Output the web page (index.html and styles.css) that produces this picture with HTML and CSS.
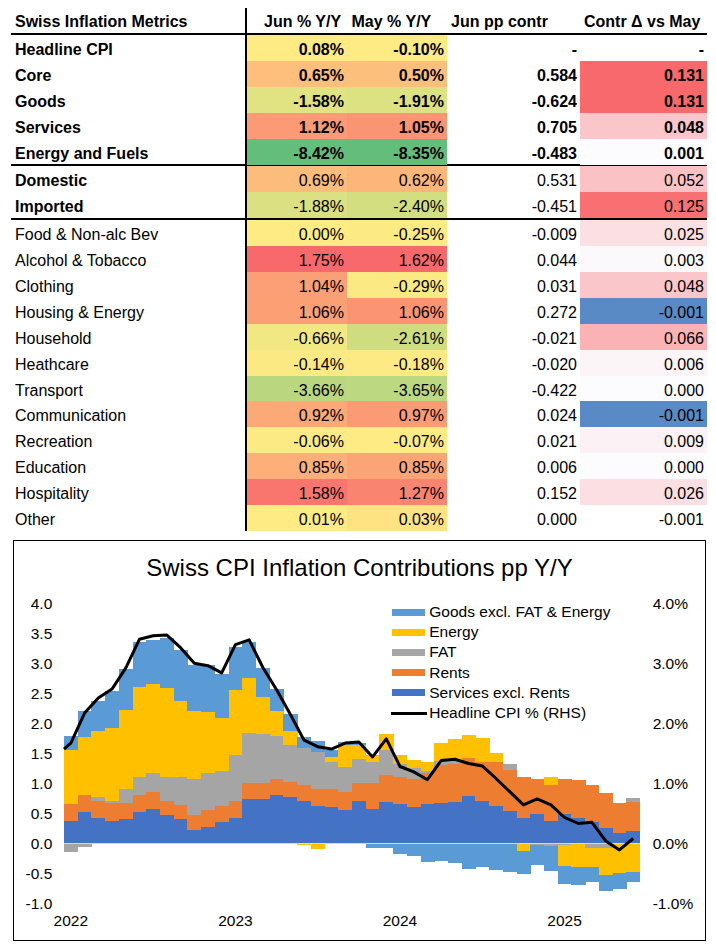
FILE: index.html
```html
<!DOCTYPE html>
<html lang="en">
<head>
<meta charset="utf-8">
<title>Swiss Inflation Metrics</title>
<link rel="stylesheet" href="styles.css">
</head>
<body>
<div class="page">
  <div class="tbl">
    <div class="row head">
      <div class="c lbl">Swiss Inflation Metrics</div>
      <div class="c h-jun">Jun % Y/Y</div>
      <div class="c h-may">May % Y/Y</div>
      <div class="c h-pp">Jun pp contr</div>
      <div class="c h-ct">Contr Δ vs May</div>
    </div>
    <div class="grp bold">
      <div class="row"><div class="c lbl">Headline CPI</div><div class="c j" data-v="0.08">0.08%</div><div class="c m" data-v="-0.10">-0.10%</div><div class="c">-</div><div class="c">-</div></div>
      <div class="row"><div class="c lbl">Core</div><div class="c j" data-v="0.65">0.65%</div><div class="c m" data-v="0.50">0.50%</div><div class="c">0.584</div><div class="c d" data-v="0.131">0.131</div></div>
      <div class="row"><div class="c lbl">Goods</div><div class="c j" data-v="-1.58">-1.58%</div><div class="c m" data-v="-1.91">-1.91%</div><div class="c">-0.624</div><div class="c d" data-v="0.131">0.131</div></div>
      <div class="row"><div class="c lbl">Services</div><div class="c j" data-v="1.12">1.12%</div><div class="c m" data-v="1.05">1.05%</div><div class="c">0.705</div><div class="c d" data-v="0.048">0.048</div></div>
      <div class="row"><div class="c lbl">Energy and Fuels</div><div class="c j" data-v="-8.42">-8.42%</div><div class="c m" data-v="-8.35">-8.35%</div><div class="c">-0.483</div><div class="c d" data-v="0.001">0.001</div></div>
    </div>
    <div class="grp bold-lbl">
      <div class="row"><div class="c lbl">Domestic</div><div class="c j" data-v="0.69">0.69%</div><div class="c m" data-v="0.62">0.62%</div><div class="c">0.531</div><div class="c d" data-v="0.052">0.052</div></div>
      <div class="row"><div class="c lbl">Imported</div><div class="c j" data-v="-1.88">-1.88%</div><div class="c m" data-v="-2.40">-2.40%</div><div class="c">-0.451</div><div class="c d" data-v="0.125">0.125</div></div>
    </div>
    <div class="grp last">
      <div class="row"><div class="c lbl">Food &amp; Non-alc Bev</div><div class="c j" data-v="0.00">0.00%</div><div class="c m" data-v="-0.25">-0.25%</div><div class="c">-0.009</div><div class="c d" data-v="0.025">0.025</div></div>
      <div class="row"><div class="c lbl">Alcohol &amp; Tobacco</div><div class="c j" data-v="1.75">1.75%</div><div class="c m" data-v="1.62">1.62%</div><div class="c">0.044</div><div class="c d" data-v="0.003">0.003</div></div>
      <div class="row"><div class="c lbl">Clothing</div><div class="c j" data-v="1.04">1.04%</div><div class="c m" data-v="-0.29">-0.29%</div><div class="c">0.031</div><div class="c d" data-v="0.048">0.048</div></div>
      <div class="row"><div class="c lbl">Housing &amp; Energy</div><div class="c j" data-v="1.06">1.06%</div><div class="c m" data-v="1.06">1.06%</div><div class="c">0.272</div><div class="c d" data-v="-0.001">-0.001</div></div>
      <div class="row"><div class="c lbl">Household</div><div class="c j" data-v="-0.66">-0.66%</div><div class="c m" data-v="-2.61">-2.61%</div><div class="c">-0.021</div><div class="c d" data-v="0.066">0.066</div></div>
      <div class="row"><div class="c lbl">Heathcare</div><div class="c j" data-v="-0.14">-0.14%</div><div class="c m" data-v="-0.18">-0.18%</div><div class="c">-0.020</div><div class="c d" data-v="0.006">0.006</div></div>
      <div class="row"><div class="c lbl">Transport</div><div class="c j" data-v="-3.66">-3.66%</div><div class="c m" data-v="-3.65">-3.65%</div><div class="c">-0.422</div><div class="c d" data-v="0.000">0.000</div></div>
      <div class="row"><div class="c lbl">Communication</div><div class="c j" data-v="0.92">0.92%</div><div class="c m" data-v="0.97">0.97%</div><div class="c">0.024</div><div class="c d" data-v="-0.001">-0.001</div></div>
      <div class="row"><div class="c lbl">Recreation</div><div class="c j" data-v="-0.06">-0.06%</div><div class="c m" data-v="-0.07">-0.07%</div><div class="c">0.021</div><div class="c d" data-v="0.009">0.009</div></div>
      <div class="row"><div class="c lbl">Education</div><div class="c j" data-v="0.85">0.85%</div><div class="c m" data-v="0.85">0.85%</div><div class="c">0.006</div><div class="c d" data-v="0.000">0.000</div></div>
      <div class="row"><div class="c lbl">Hospitality</div><div class="c j" data-v="1.58">1.58%</div><div class="c m" data-v="1.27">1.27%</div><div class="c">0.152</div><div class="c d" data-v="0.026">0.026</div></div>
      <div class="row"><div class="c lbl">Other</div><div class="c j" data-v="0.01">0.01%</div><div class="c m" data-v="0.03">0.03%</div><div class="c">0.000</div><div class="c">-0.001</div></div>
    </div>
  </div>

  <div class="chart">
    <h2 class="chart-title">Swiss CPI Inflation Contributions pp Y/Y</h2>
    <svg id="plot" class="plot" width="691" height="359" viewBox="0 0 691 359" shape-rendering="crispEdges"></svg>
    <div class="legend">
      <div class="lg-item"><span class="mk"><span class="sw sw-goods"></span></span><span class="lg-txt">Goods excl. FAT &amp; Energy</span></div>
      <div class="lg-item"><span class="mk"><span class="sw sw-energy"></span></span><span class="lg-txt">Energy</span></div>
      <div class="lg-item"><span class="mk"><span class="sw sw-fat"></span></span><span class="lg-txt">FAT</span></div>
      <div class="lg-item"><span class="mk"><span class="sw sw-rents"></span></span><span class="lg-txt">Rents</span></div>
      <div class="lg-item"><span class="mk"><span class="sw sw-svc"></span></span><span class="lg-txt">Services excl. Rents</span></div>
      <div class="lg-item"><span class="mk"><span class="ln"></span></span><span class="lg-txt">Headline CPI % (RHS)</span></div>
    </div>
  </div>
</div>
<script src="script.js"></script>
</body>
</html>
```

FILE: styles.css
```css
* { box-sizing: border-box; }

html, body {
  margin: 0;
  background: #ffffff;
}

body {
  font-family: "Liberation Sans", Arial, sans-serif;
  color: #000000;
}

.page {
  width: 716px;
  padding: 8px 0 0 11px;
}

.tbl {
  width: 696px;
}

.row {
  display: grid;
  grid-template-columns: 236px 100px 100px 133px 127px;
  height: 25.9px;
}

.c {
  padding: 3px 3px 0 0;
  line-height: 23px;
  font-size: 16px;
  text-align: right;
  white-space: nowrap;
  overflow: visible;
}

.c.lbl {
  text-align: left;
  padding-left: 4px;
  border-right: 2px solid #000000;
}

.head {
  height: 27px;
  border-bottom: 2px solid #000000;
  font-weight: bold;
}

.head .c {
  padding-top: 2px;
  text-align: left;
}

.head .h-jun { padding-left: 17px; }
.head .h-may { padding-left: 4.5px; }
.head .h-pp { padding-left: 4px; }
.head .h-ct { padding-left: 4px; }

.grp {
  border-bottom: 2px solid #000000;
}

.grp.last {
  border-bottom: none;
}

.bold .c { font-weight: bold; }
.bold-lbl .lbl { font-weight: bold; }

/* chart */
.chart {
  position: relative;
  width: 693px;
  height: 401px;
  margin: 9px 0 0 2px;
  border: 1px solid #000000;
}

.chart-title {
  margin: 0;
  padding-top: 13px;
  height: 40px;
  line-height: 27px;
  font-size: 24px;
  font-weight: normal;
  text-align: center;
}

.plot {
  display: block;
}

.ax {
  font-family: "Liberation Sans", Arial, sans-serif;
  font-size: 15.5px;
  fill: #000000;
}

.legend {
  position: absolute;
  left: 376.7px;
  top: 61.2px;
}

.lg-item {
  display: flex;
  align-items: center;
  height: 20.2px;
  font-size: 15.5px;
  line-height: 20.2px;
}

.mk {
  display: flex;
  justify-content: center;
  align-items: center;
  width: 36px;
  height: 20.2px;
}

.sw {
  display: block;
  width: 33px;
  height: 7px;
}

.sw-goods { background: #5b9bd5; }
.sw-energy { background: #ffc000; }
.sw-fat { background: #a5a5a5; }
.sw-rents { background: #ed7d31; }
.sw-svc { background: #4472c4; }

.ln {
  display: block;
  width: 36px;
  height: 3px;
  background: #000000;
}

.lg-txt {
  margin-left: 2.6px;
  white-space: nowrap;
}
```

FILE: script.js
```js
(function () {
  // ---------- table colour scales ----------
  var GREEN = [99, 190, 123], YELLOW = [255, 235, 132], RED = [248, 105, 107];
  var BLUE = [90, 138, 198], WHITE = [252, 252, 255];

  function mix(a, b, t) {
    t = Math.max(0, Math.min(1, t));
    return a.map(function (x, i) { return Math.round(x + (b[i] - x) * t); });
  }
  function scale3(v, min, mid, max, c1, c2, c3) {
    if (v <= mid) return mix(c1, c2, mid === min ? 1 : (v - min) / (mid - min));
    return mix(c2, c3, max === mid ? 1 : (v - mid) / (max - mid));
  }
  function median(arr) {
    var s = arr.slice().sort(function (a, b) { return a - b; });
    var p = (s.length - 1) * 0.5, lo = Math.floor(p), hi = Math.ceil(p);
    return s[lo] + (s[hi] - s[lo]) * (p - lo);
  }
  function paint(sel, useMedian, c1, c2, c3) {
    var cells = Array.prototype.slice.call(document.querySelectorAll(sel));
    var vals = cells.map(function (c) { return parseFloat(c.getAttribute('data-v')); });
    var min = Math.min.apply(null, vals), max = Math.max.apply(null, vals);
    var mid = useMedian ? median(vals) : 0;
    cells.forEach(function (c, i) {
      var col = scale3(vals[i], min, mid, max, c1, c2, c3);
      c.style.backgroundColor = 'rgb(' + col.join(',') + ')';
    });
  }
  paint('.c.j', true, GREEN, YELLOW, RED);
  paint('.c.m', true, GREEN, YELLOW, RED);
  paint('.c.d', false, BLUE, WHITE, RED);

  // ---------- chart ----------
  var svg = document.getElementById('plot');
  var NS = 'http://www.w3.org/2000/svg';
  function el(tag, attrs, text) {
    var e = document.createElementNS(NS, tag);
    for (var k in attrs) e.setAttribute(k, attrs[k]);
    if (text != null) e.textContent = text;
    svg.appendChild(e);
    return e;
  }

  // [Services excl. Rents, Rents, FAT, Energy, Goods excl. FAT & Energy]
  var D = [
    [.38, .27, -.14, .91, .23],
    [.52, .29, -.06, .97, .43],
    [.43, .28, .07, 1.09, .50],
    [.37, .31, .02, 1.23, .61],
    [.40, .28, .23, 1.32, .68],
    [.52, .29, .29, 1.51, .74],
    [.58, .28, .32, 1.47, .74],
    [.47, .24, .40, 1.48, .83],
    [.40, .24, .46, 1.27, .85],
    [.23, .25, .60, 1.12, .78],
    [.27, .28, .62, 1.02, .78],
    [.35, .28, .58, .88, .74],
    [.43, .28, .76, 1.09, .71],
    [.74, .27, .83, .92, .59],
    [.74, .27, .81, .62, .48],
    [.80, .28, .71, .41, .37],
    [.77, .26, .61, .23, .28],
    [.70, .27, .62, -.03, .18],
    [.63, .27, .63, -.09, .18],
    [.61, .30, .45, .08, .11],
    [.55, .30, .43, .36, .05],
    [.70, .30, .40, .24, .03],
    [.57, .43, .36, .11, -.08],
    [.69, .45, .42, .26, -.07],
    [.66, .45, .22, .14, -.18],
    [.61, .47, .18, .13, -.21],
    [.66, .51, .03, .16, -.31],
    [.68, .63, .06, .30, -.29],
    [.69, .64, .04, .37, -.32],
    [.79, .63, 0, .39, -.42],
    [.71, .65, 0, .39, -.40],
    [.62, .74, 0, .14, -.44],
    [.54, .69, .10, 0, -.47],
    [.42, .69, 0, -.12, -.39],
    [.49, .59, -.03, 0, -.33],
    [.37, .60, -.05, .14, -.41],
    [.49, .59, -.03, -.35, -.30],
    [.42, .64, 0, -.40, -.29],
    [.36, .61, -.07, -.33, -.24],
    [.25, .59, -.07, -.45, -.27],
    [.17, .51, 0, -.49, -.27],
    [.21, .48, .07, -.47, -.17]
  ];
  var LINE = [1.67, 2.17, 2.42, 2.57, 2.92, 3.40, 3.46, 3.47, 3.26, 3.00, 2.96, 2.84,
    3.31, 3.39, 2.93, 2.56, 2.15, 1.72, 1.61, 1.57, 1.67, 1.69, 1.44, 1.74,
    1.28, 1.19, 1.06, 1.38, 1.40, 1.33, 1.29, 1.08, 0.86, 0.64, 0.74, 0.64,
    0.43, 0.33, 0.35, 0.04, -0.11, 0.08];
  var COLORS = ['#4472c4', '#ed7d31', '#a5a5a5', '#ffc000', '#5b9bd5'];

  var X0 = 50, BW = 576 / 42, Y0 = 262.3, S = 60;

  D.forEach(function (bar, i) {
    var pos = 0, neg = 0, x = X0 + i * BW;
    bar.forEach(function (v, s) {
      if (v === 0) return;
      var y, h;
      if (v > 0) { y = Y0 - (pos + v) * S; h = v * S; pos += v; }
      else { y = Y0 + neg * S; h = -v * S; neg += -v; }
      el('rect', { x: x.toFixed(2), y: y.toFixed(2), width: (BW + 0.4).toFixed(2), height: h.toFixed(2), fill: COLORS[s] });
    });
  });

  // zero axis line
  el('line', { x1: X0, y1: Y0, x2: X0 + 42 * BW, y2: Y0, stroke: '#d9d9d9', 'stroke-width': 1 });

  // headline CPI line
  var pts = [[X0, Y0 - 1.57 * S]];
  LINE.forEach(function (v, i) { pts.push([X0 + (i + 0.5) * BW, Y0 - v * S]); });
  el('polyline', {
    points: pts.map(function (p) { return p[0].toFixed(2) + ',' + p[1].toFixed(2); }).join(' '),
    fill: 'none', stroke: '#000000', 'stroke-width': 3, 'stroke-linejoin': 'round',
    'shape-rendering': 'geometricPrecision'
  });

  // left axis labels
  for (var v = 4; v >= -1.001; v -= 0.5) {
    el('text', { x: 38.3, y: (Y0 - v * S + 5.5).toFixed(2), 'text-anchor': 'end', 'class': 'ax' }, (Math.abs(v) < 1e-9 ? 0 : v).toFixed(1));
  }
  // right axis labels
  for (var r = 4; r >= -1; r -= 1) {
    el('text', { x: 638.7, y: (Y0 - r * S + 5.5).toFixed(2), 'class': 'ax' }, r.toFixed(1) + '%');
  }
  // year labels
  ['2022', '2023', '2024', '2025'].forEach(function (yr, k) {
    el('text', { x: (X0 + (12 * k + 0.5) * BW).toFixed(2), y: 344.5, 'text-anchor': 'middle', 'class': 'ax' }, yr);
  });
})();
```
